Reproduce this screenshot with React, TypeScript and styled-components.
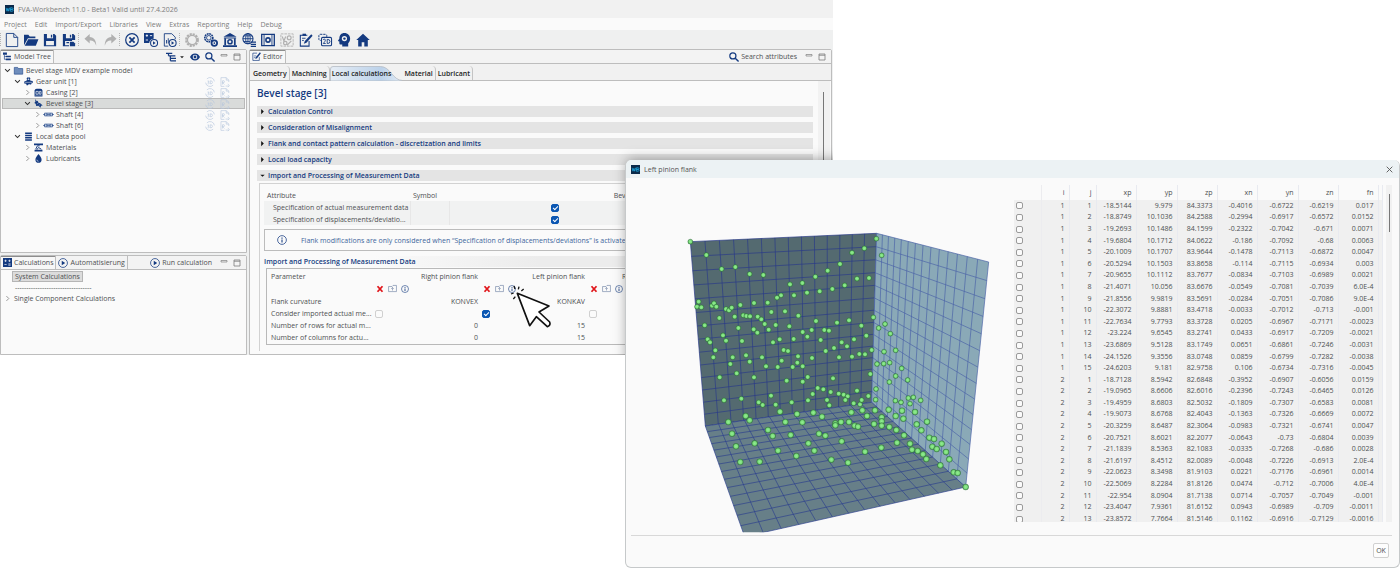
import React from "react";
import styled, { createGlobalStyle, css } from "styled-components";

const NAVY = "#143a80";
const LINE = "#bdbdbd";

const GlobalStyle = createGlobalStyle`
  * { box-sizing: border-box; }
  body {
    margin: 0;
    background: #fff;
    color: #4e5052;
    font-family: "Open Sans", "Noto Sans", sans-serif;
    font-size: 7px;
    line-height: 11px;
  }
  button, input { font: inherit; color: inherit; margin: 0; }
  button { padding: 0; border: 0; background: none; white-space: nowrap; }
  h1, h2, h3, p, ul { margin: 0; padding: 0; font-size: inherit; font-weight: inherit; list-style: none; }
  table { border-collapse: collapse; }
  th, td { padding: 0; font-weight: 400; white-space: nowrap; }
`;

/* ---------- icons ---------- */

const Svg = styled.svg<{ $size?: number; $tone?: string }>`
  display: block;
  flex: none;
  width: ${(p) => p.$size ?? 14}px;
  height: ${(p) => p.$size ?? 14}px;
  color: ${(p) => p.$tone ?? NAVY};
  fill: none;
  stroke: currentColor;
  stroke-width: 1.4;
  overflow: visible;
`;

const solid = { fill: "currentColor", stroke: "none" };

const art: Record<string, React.ReactNode> = {
  logo: (
    <>
      <rect width="16" height="16" fill="#0b2a4a" stroke="none" />
      <path d="M2 5l1.5 6L5 6l1.5 5L8 5M9.5 5v6M9.5 5h3.2c2 0 2 2.8 0 2.8H9.5h3.4c2 0 2 3.2 0 3.2H9.5" stroke="#1ba0d8" strokeWidth="1.5" />
    </>
  ),
  file: <path d="M1.500 .5h8.500l4.500 4.500v10.500H1.500zM10 .5v4.500h4.500" strokeWidth="1" />,
  open: (
    <>
      <path d="M0 14V2h5l1.500 2H13v2H4.500z" {...solid} />
      <path d="M4.800 7H16.500l-3 7.500H.8z" {...solid} />
    </>
  ),
  save: <path fillRule="evenodd" d="M1 1h12l2 2v12H1zM4.500 1v5h7V1zM3.500 9v5h9V9zM9 2h1.500v3H9z" {...solid} />,
  saveAll: (
    <>
      <path fillRule="evenodd" d="M1 1h12l2 2v5h-3.500v1h-8v5H8v1H1zM4.500 1v5h7V1zM9 2h1.500v3H9z" {...solid} />
      <path d="M9 10h4l2 2v3H9z" {...solid} />
      <path d="M5 11h3" />
    </>
  ),
  undo: <path d="M6.500 1L.5 6.500l6 5.500V8.500c4 0 6 1.500 7.500 6C14 8.500 11.500 5 6.500 4.500z" {...solid} />,
  redo: <path d="M9.500 1l6 5.500-6 5.500V8.500c-4 0-6 1.500-7.500 6C2 8.500 4.500 5 9.500 4.500z" {...solid} />,
  cancel: (
    <>
      <circle cx="8" cy="8" r="7.200" />
      <path d="M5 5l6 6M11 5l-6 6" strokeWidth="2" />
    </>
  ),
  calcPlay: (
    <>
      <path d="M0 0h11v6.500a5 5 0 0 0-5 5H0z" {...solid} />
      <path d="M2 3h2.600M3.300 1.700v2.600M6.800 3h2.500M2 8h2.600" stroke="#fff" strokeWidth="1" />
      <circle cx="11.500" cy="11.500" r="4" strokeWidth="1.200" />
      <path d="M10.300 9.500v4l3-2z" {...solid} />
    </>
  ),
  docPlay: (
    <>
      <path d="M6 15H1.500V.8H10l4 4V7" strokeWidth="1" />
      <path d="M4 12V8M6 12V6" strokeWidth="1" />
      <circle cx="11" cy="11.500" r="4" strokeWidth="1.200" />
      <path d="M9.800 9.500v4l3-2z" {...solid} />
    </>
  ),
  ring: (
    <>
      <circle cx="8" cy="8" r="6.600" strokeWidth="2.600" strokeDasharray="2.400 1.050" />
      <circle cx="8" cy="8" r="5.200" strokeWidth="1.400" />
    </>
  ),
  gears: (
    <>
      <circle cx="5.500" cy="5.500" r="4.600" strokeWidth="1.800" strokeDasharray="2 .7" />
      <circle cx="5.500" cy="5.500" r="2.600" strokeWidth="1" />
      <circle cx="11.800" cy="11.500" r="3.200" strokeWidth="2" />
      <circle cx="11.800" cy="11.500" r="1" {...solid} />
    </>
  ),
  bank: (
    <>
      <path d="M8 0l7.500 4.200H.5zM0 14h16v2H0zM1 5h14v1.200H1z" {...solid} />
      <path d="M2.500 6v8M13.500 6v8" strokeWidth="2" />
      <circle cx="8" cy="10" r="2.400" strokeWidth="1.700" />
    </>
  ),
  globe: (
    <>
      <circle cx="6.800" cy="6.500" r="5.800" strokeWidth="1.200" />
      <ellipse cx="6.800" cy="6.500" rx="2.600" ry="5.800" strokeWidth="1" />
      <path d="M1 6.500h11.600M2 3.300h9.600M2 9.700h7M6.800.7v11.600" strokeWidth="1" />
      <path d="M10 10.500h6M10 12.900h6M10 15.300h6" strokeWidth="1.500" />
    </>
  ),
  frame: (
    <>
      <path d="M.8 1.500h14.400v13H.8z" strokeWidth="1.500" />
      <path d="M3.500 1.500v13M12.500 1.500v13" strokeWidth="1" />
      <circle cx="8" cy="8" r="2.400" strokeWidth="1.800" />
    </>
  ),
  vp: (
    <>
      <path d="M1 1h14v14H1z" strokeWidth="1" strokeDasharray="3 1" />
      <path d="M2.500 4l2 5 2-5" strokeWidth="1.300" />
      <circle cx="10.500" cy="5.500" r="2.200" />
      <circle cx="6" cy="11.500" r="2" />
      <path d="M8 14l5-5" />
    </>
  ),
  note: (
    <>
      <path d="M11.500 9v6H1.500V2.500h8" strokeWidth="1.200" />
      <path d="M4 .8h4v2.500H4z" {...solid} />
      <path d="M14 1.500l1.500 1.500L8.500 11l-3 1.200L6.700 9z" {...solid} />
      <path d="M3.500 6h4M3.500 8.500h2" strokeWidth="1" />
    </>
  ),
  twoD: (
    <>
      <rect x="1" y="1.500" width="9" height="7" rx="1.500" strokeWidth="1.100" strokeDasharray="2.500 1" />
      <rect x="4" y="5" width="11.500" height="9.500" rx="1.500" fill="#eeeff0" strokeWidth="1.200" />
      <path d="M6 8q0-1 1.200-1t1.200 1.200Q8.400 9.500 6 12h2.800M10.500 7.300v4.700q3.200.3 3.200-2.300T10.500 7.300z" strokeWidth="1" />
    </>
  ),
  head: (
    <>
      <path fillRule="evenodd" d="M8.300 0C12.500 0 15 2.800 15 6.500c0 2.700-1.200 4-2.200 5.200V15.500H6V13.200H4.200c-1 0-1.500-.6-1.500-1.500V9.600L1 9.200l1.700-3C2.700 2.500 5 0 8.300 0zM8.500 3.400a3 3 0 1 0 0 6 3 3 0 0 0 0-6z" {...solid} />
      <circle cx="8.500" cy="6.400" r="1.400" {...solid} />
    </>
  ),
  home: <path d="M8 .8L.3 8h2.200v7.500h4v-5h3v5h4V8h2.200z" {...solid} />,
  tree: (
    <>
      <path d="M0 1h7v4H0zM5 6.500h9v3H5zM5 11.500h9v3H5z" {...solid} />
      <path d="M2.500 5v8H5M2.500 8H5" strokeWidth="1.200" />
    </>
  ),
  hierarchy: <path d="M0 2h10M4 6h11M4 6V2M7 10h9M7 14h9M7 6v8" strokeWidth="2" />,
  eye: (
    <>
      <path fillRule="evenodd" d="M8 2.500c4 0 6.600 2.600 8 5.500-1.400 2.900-4 5.500-8 5.500S1.400 10.900 0 8c1.400-2.900 4-5.500 8-5.500zm0 1.800a3.700 3.700 0 1 0 0 7.400 3.700 3.700 0 0 0 0-7.400z" {...solid} />
      <circle cx="8" cy="8" r="2.300" {...solid} />
    </>
  ),
  search: (
    <>
      <circle cx="6.200" cy="6.200" r="4.900" strokeWidth="1.900" />
      <path d="M10 10l5.300 5.300" strokeWidth="2.300" />
    </>
  ),
  minimize: <path d="M2 3h12v3H2z" strokeWidth="1.300" />,
  maximize: <path d="M2 2h12v12H2zM2 4.500h12" strokeWidth="1.500" />,
  caret: <path d="M3 6h10l-5 5z" {...solid} />,
  open_down: <path d="M2.500 5l5.500 5.500L13.500 5" strokeWidth="2.300" />,
  open_right: <path d="M5.500 2.500L11 8l-5.500 5.500" strokeWidth="2" />,
  folder: <path d="M.5 2.500h6l1.500 2h7.500v10H.5z" fill="#6f8dbc" stroke={NAVY} strokeWidth="1" />,
  gearUnit: (
    <>
      <path d="M5.500 1h5l1 2.500-1.500 1.500 2 1.500L15.500 7v3.500l-2 .5-1 2.500H10l-1-1.500-2 2.500H4.500L4 12l-3.500-.5V8L4 6.500 6 5 4.500 3.500z" {...solid} />
      <circle cx="8" cy="4" r="1.300" fill="#dfe5ee" stroke="none" />
      <path d="M2 9.500h12" stroke="#dfe5ee" strokeWidth="1" />
    </>
  ),
  casing: (
    <>
      <path d="M1 4q2-3 5-2.500h5Q14 1.500 15 4v11H1z" {...solid} />
      <path d="M3.500 6h4v5h-4zM9.500 6h3v5h-3z" stroke="#fff" strokeWidth="1.200" />
      <path d="M1 13h14" stroke="#9db0cf" strokeWidth=".8" />
    </>
  ),
  bevel: (
    <>
      <path d="M2 0l3 4 1.500-1L8 6.500l3 1 4.500 4-3 .5-1 3.500L8 12l-4 .5-1-4L.5 7l2-2z" {...solid} />
      <path d="M5 9l3-2M9 11l2-1" stroke="#b9c6dd" strokeWidth=".9" />
    </>
  ),
  shaft: (
    <>
      <path d="M-1 8h3M14 8h3" strokeWidth="2" />
      <path d="M1 5.500h14v5H1z" fill="#c4d0e4" strokeWidth="1.100" />
      <path d="M5 5.500v5M11 5.500v5M5 8h6" strokeWidth="1" />
    </>
  ),
  pool: <path d="M2 2.200h12M2 6.200h12M2 10.200h12M2 14.200h12" strokeWidth="2.800" />,
  materials: (
    <>
      <path d="M0 1h16v3H0zM1 12h14v3H1z" {...solid} />
      <path d="M3 11l3-6h4M5 12l3-4 5 3" strokeWidth="1.700" />
    </>
  ),
  drop: (
    <>
      <path d="M8 0c3 4 5.500 6.800 5.500 10a5.500 5.500 0 0 1-11 0C2.500 6.800 5 4 8 0z" {...solid} />
      <path d="M5 10a3 3 0 0 0 3 3" stroke="#fff" strokeWidth="1" />
    </>
  ),
  view3d: <path d="M1 9a7 7 0 0 0 12 4M15 7A7 7 0 0 0 3 3M4 6.500h2.500L5 8.500q2 0 1.500 1.600T4 11M8.500 6v5q3.500 0 3.500-2.500T8.500 6" strokeWidth="1" />,
  report: <path d="M7 15H1.500V1H10l4 4v3M10 1v4h4M4 12V6h2.500q1.500 1.500 0 3H4l3 3M9 14.500h5M12.500 11l2.500 3-2.500 2" strokeWidth="1" />,
  calc: (
    <>
      <path d="M0 0h16v16H0z" {...solid} />
      <path d="M2.500 5h4M4.500 3v4M9.500 5h4M2.500 11.500h4M9.500 10.500h4M9.500 12.800h4M11.500 3v4" stroke="#fff" strokeWidth="1.200" />
    </>
  ),
  play: (
    <>
      <circle cx="8" cy="8" r="7.100" strokeWidth="1.200" />
      <path d="M6 4.500v7L11.500 8z" {...solid} />
    </>
  ),
  editor: (
    <>
      <path d="M13 9v6H1.500V2H9" strokeWidth="1.200" />
      <path d="M3.500 7h4M3.500 10h3" strokeWidth="1" />
      <path d="M14 .5L15.800 2 9 11l-3 1.500L7 9z" {...solid} />
    </>
  ),
  info: (
    <>
      <circle cx="8" cy="8" r="7" strokeWidth="1.200" />
      <path d="M8 7v5M8 4v1.800" strokeWidth="1.700" />
    </>
  ),
  remove: <path d="M3 2.500l10 11M13 2.500l-10 11" strokeWidth="3.600" />,
  importFile: <path d="M1 4.500h6l2-2h6v11H1zM8 11.500v-5M5.800 8.500L8 6.200l2.200 2.300" strokeWidth="1" />,
  close: <path d="M3 3l10 10M13 3L3 13" strokeWidth="1.600" />,
};

const Icon = ({ name, size, tone }: { name: string; size?: number; tone?: string }) => (
  <Svg viewBox="0 0 16 16" $size={size} $tone={tone} aria-hidden="true">
    {art[name]}
  </Svg>
);

/* ---------- main window ---------- */

const Stage = styled.div`
  position: relative;
  min-height: 568px;
`;

const MainWindow = styled.main`
  position: relative;
  width: 59.5%;
  background: #eff0f0;
  overflow: hidden;
`;

const TitleBar = styled.header<{ $tint: string }>`
  display: flex;
  align-items: center;
  gap: 4px;
  height: 18px;
  padding: 0 5px;
  background: ${(p) => p.$tint};
`;

const WindowTitle = styled.h1<{ $faded?: boolean }>`
  flex: 1;
  color: ${(p) => (p.$faded ? "#7d7d7d" : "#555")};
`;

const MenuBar = styled.nav`
  display: flex;
  gap: 8px;
  height: 12px;
  padding: 0 4px;
  background: #fafafa;
  color: #7c7c7c;
`;

const ToolBar = styled.div`
  display: flex;
  align-items: center;
  height: 19px;
`;

const ToolButton = styled.button`
  display: flex;
  justify-content: center;
  width: 19px;
`;

const Grip = styled.span`
  width: 3px;
  height: 13px;
  border-left: 1px dotted #b4b4b4;
  &:first-child { width: 2px; }
`;

const Workspace = styled.div`
  display: grid;
  grid-template-columns: 247px minmax(0, 1fr);
  gap: 2px;
  padding-right: 1px;
`;

const Side = styled.div`
  display: grid;
  grid-template-rows: 204px 1fr;
  gap: 2px;
`;

const Pane = styled.section`
  display: flex;
  flex-direction: column;
  border: 1px solid ${LINE};
  border-radius: 2px 2px 0 0;
  background: #fafafa;
`;

const PaneBar = styled.div`
  display: flex;
  align-items: stretch;
  height: 14px;
  flex: none;
  padding-right: 5px;
  border-bottom: 1px solid ${LINE};
  background: #f3f3f3;
`;

const PaneTab = styled.button<{ $active?: boolean }>`
  display: flex;
  align-items: center;
  gap: 2px;
  padding: 0 2px;
  border-right: 1px solid ${LINE};
  ${(p) => p.$active && css`box-shadow: inset 0 1px #8d8d8d; background: #f7f7f7;`}
`;

const PaneTools = styled.div`
  display: flex;
  align-items: center;
  gap: 5px;
  margin-left: auto;
`;

const PaneTool = styled.button<{ $labelled?: boolean }>`
  display: flex;
  align-items: center;
  gap: ${(p) => (p.$labelled ? 2 : 3)}px;
  margin-right: ${(p) => (p.$labelled ? 3 : 0)}px;
`;

const Tree = styled.ul`
  padding: 1px 1px 0 1px;
`;

const TreeRow = styled.li<{ $level: number; $selected?: boolean }>`
  display: flex;
  align-items: center;
  gap: 3px;
  height: 11px;
  padding: 0 15px 0 ${(p) => 2 + p.$level * 10}px;
  ${(p) => p.$selected && css`background: #d9dbda; box-shadow: inset 0 0 0 1px #b9b9b9;`}
`;

const TreeLabel = styled.span`
  flex: 1;
`;

const TreeMarks = styled.span`
  display: flex;
  gap: 5px;
`;

const CalcList = styled.div`
  display: flex;
  flex-direction: column;
  align-items: flex-start;
  padding: 1px 3px;
`;

const CalcChoice = styled.button`
  margin-left: 8px;
  padding: 0 2px;
  border: 1px solid #b5b5b5;
  background: #dcdcdc;
  line-height: 9px;
`;

const CalcRule = styled.span`
  margin-left: 11px;
`;

const CalcGroup = styled.button`
  display: flex;
  align-items: center;
  gap: 3px;
`;

const EditorTabs = styled.div`
  display: flex;
  align-items: stretch;
  height: 17px;
  flex: none;
  padding: 2px 0 0 1px;
  border-bottom: 1px solid ${LINE};
  background: #f1f1f1;
`;

const EditorTab = styled.button<{ $active?: boolean }>`
  position: relative;
  padding: 0 2px;
  border-right: 1px solid #c4c4c4;
  border-radius: 0 4px 0 0;
  color: #1c1c1c;
  font-weight: 600;
  ${(p) => p.$active && css`padding-right: 11px; border-right: 0;`}
`;

const TabShape = styled.svg`
  position: absolute;
  inset: 0 auto auto 0;
  width: 100%;
  height: 15px;
`;

const TabText = styled.span`
  position: relative;
`;

const EditorBody = styled.div`
  display: flex;
  flex: 1;
`;

const EditorContent = styled.div`
  flex: 1;
  min-width: 0;
  padding: 5px 5px 3px 7px;
`;

const EditorScroll = styled.div`
  width: 12px;
  margin-right: 1px;
  padding: 11px 5px 0;
  background: #f2f2f2;
`;

const Thumb = styled.div<{ $height: string }>`
  width: 1px;
  height: ${(p) => p.$height};
  background: #777;
`;

const PageTitle = styled.h2`
  margin-bottom: 6px;
  color: ${NAVY};
  font-size: 10px;
  font-weight: 600;
  line-height: 14px;
`;

const SectionBar = styled.button`
  display: flex;
  align-items: center;
  gap: 2px;
  width: 100%;
  height: 11px;
  margin-bottom: 5px;
  padding-left: 2px;
  background: #e4e4e4;
  color: ${NAVY};
  font-weight: 600;
`;

const SectionBox = styled.div`
  margin: -3px 0 0 2px;
  padding: 5px 0 6px 4px;
  border: 1px solid #d2d2d2;
  border-width: 1px 0 0 1px;
`;

const AttributeTable = styled.table`
  width: 100%;
  table-layout: fixed;
  th { height: 12px; padding-left: 3px; text-align: left; }
  thead th:nth-child(3) { text-align: right; }
  tbody th { padding-left: 9px; }
  tbody tr { height: 12px; background: #f1f2f2; }
  td { border-left: 1px solid #e7e7e7; text-align: center; }
`;

const CheckBox = styled.input<{ $plain?: boolean }>`
  appearance: none;
  display: inline-block;
  position: relative;
  width: ${(p) => (p.$plain ? 7 : 8)}px;
  height: ${(p) => (p.$plain ? 7 : 8)}px;
  border: 1px solid ${(p) => (p.$plain ? "#9a9a9a" : "#d0d0d0")};
  border-radius: 2px;
  background: #fbfbfb;
  vertical-align: middle;
  &:checked {
    border-color: #0b57b3;
    background: #0b57b3;
  }
  &:checked::after {
    content: "";
    position: absolute;
    left: 1px;
    top: 1px;
    width: 4px;
    height: 2px;
    border: solid #fff;
    border-width: 0 0 1px 1px;
    transform: rotate(-45deg);
  }
`;

const Notice = styled.p`
  display: flex;
  align-items: center;
  gap: 14px;
  height: 22px;
  margin: 4px 0 5px;
  padding-left: 12px;
  border: 1px solid #bcbcbc;
  color: #41669c;
  white-space: nowrap;
  overflow: hidden;
`;

const SubHeading = styled.h3`
  color: ${NAVY};
  font-weight: 600;
  background: linear-gradient(90deg, transparent 20%, #ececec 50%);
`;

const ParamFrame = styled.div`
  margin: 1px 0 0 2px;
  padding: 1px 0;
  border: 1px solid #b9b9b9;
`;

const ParamTable = styled.table`
  width: 535px;
  table-layout: fixed;
  tr { height: 12px; }
  th, td { text-align: right; padding-right: 3px; }
  tr > :first-child { text-align: left; padding: 0 0 0 4px; }
  .actions { height: 13px; }
  .boxes { text-align: left; padding: 0 0 0 1px; }
`;

const CellTools = styled.span`
  display: flex;
  gap: 4px;
  padding-left: 2px;
`;

const Pointer = styled.svg`
  position: absolute;
  left: 508px;
  top: 285px;
  width: 45px;
  height: 43px;
`;

const DialogShade = styled.div`
  position: absolute;
  left: 75.5%;
  right: -20px;
  top: 162px;
  bottom: -20px;
  box-shadow: 0 0 12px 2px rgba(0, 0, 0, 0.4);
`;

/* ---------- dialog ---------- */

const Dialog = styled.section`
  position: absolute;
  top: 160px;
  right: 0;
  width: 55.35%;
  overflow: hidden;
  border: 1px solid #c6c9ca;
  border-width: 0 1px 1px 1px;
  border-radius: 6px;
  background: #fafafa;
`;

const DialogBody = styled.div`
  display: flex;
  align-items: flex-start;
`;

const Chart = styled.svg`
  flex: 1;
  min-width: 0;
  height: 355px;
`;

const TableArea = styled.div`
  display: flex;
  gap: 3px;
  width: 378px;
  height: 337px;
  margin: 7px 7px 0 0;
  overflow: hidden;
`;

const PointTable = styled.table`
  width: 368px;
  height: 340px;
  table-layout: fixed;
  background: linear-gradient(#fafafa 15px, #f0f0f0 15px);
  line-height: 10px;
  thead tr { height: 15px; }
  th, td { padding-right: 4px; border-right: 1px solid #e8eaf0; text-align: right; }
  tr > :first-child { padding: 0 0 0 2px; border-right-color: #ececef; text-align: left; }
`;

const TableScroll = styled.div`
  width: 7px;
  height: 337px;
  padding: 9px 3px 0;
  background: #f1f1f1;
`;

const DialogFooter = styled.footer`
  display: flex;
  justify-content: flex-end;
  margin: 2px 7px 0 5px;
  padding: 7px 3px 9px 0;
  border-top: 1px solid #d8d8d8;
`;

const OkButton = styled.button`
  width: 16px;
  height: 15px;
  border: 1px solid #d0d0d0;
  border-radius: 2px;
  background: #fdfdfd;
`;

/* ---------- data ---------- */

const menus = ["Project", "Edit", "Import/Export", "Libraries", "View", "Extras", "Reporting", "Help", "Debug"];

const toolGroups: { icon: string; off?: boolean }[][] = [
  [{ icon: "file" }, { icon: "open" }, { icon: "save" }, { icon: "saveAll" }],
  [{ icon: "undo", off: true }, { icon: "redo", off: true }],
  [{ icon: "cancel" }, { icon: "calcPlay" }, { icon: "docPlay" }],
  [
    { icon: "ring", off: true }, { icon: "gears" }, { icon: "bank" }, { icon: "globe" }, { icon: "frame" },
    { icon: "vp", off: true }, { icon: "note" }, { icon: "twoD" }, { icon: "head" }, { icon: "home" },
  ],
];

const treeRows: [number, string, string, boolean, boolean][] = [
  [0, "folder", "Bevel stage MDV example model", true, false],
  [1, "gearUnit", "Gear unit [1]", true, true],
  [2, "casing", "Casing [2]", false, true],
  [2, "bevel", "Bevel stage [3]", true, true],
  [3, "shaft", "Shaft [4]", false, true],
  [3, "shaft", "Shaft [6]", false, true],
  [1, "pool", "Local data pool", true, false],
  [2, "materials", "Materials", false, false],
  [2, "drop", "Lubricants", false, false],
];

const sections = [
  "Calculation Control",
  "Consideration of Misalignment",
  "Flank and contact pattern calculation - discretization and limits",
  "Local load capacity",
];

const flanks = ["Right pinion flank", "Left pinion flank", "Right bevel gear flank", "Left bevel gear flank"];

const points = `1 1 -18.5144 9.979 84.3373 -0.4016 -0.6722 -0.6219 0.017
1 2 -18.8749 10.1036 84.2588 -0.2994 -0.6917 -0.6572 0.0152
1 3 -19.2693 10.1486 84.1599 -0.2322 -0.7042 -0.671 0.0071
1 4 -19.6804 10.1712 84.0622 -0.186 -0.7092 -0.68 0.0063
1 5 -20.1009 10.1707 83.9644 -0.1478 -0.7113 -0.6872 0.0047
1 6 -20.5294 10.1503 83.8658 -0.114 -0.7115 -0.6934 0.003
1 7 -20.9655 10.1112 83.7677 -0.0834 -0.7103 -0.6989 0.0021
1 8 -21.4071 10.056 83.6676 -0.0549 -0.7081 -0.7039 6.0E-4
1 9 -21.8556 9.9819 83.5691 -0.0284 -0.7051 -0.7086 9.0E-4
1 10 -22.3072 9.8881 83.4718 -0.0033 -0.7012 -0.713 -0.001
1 11 -22.7634 9.7793 83.3728 0.0205 -0.6967 -0.7171 -0.0023
1 12 -23.224 9.6545 83.2741 0.0433 -0.6917 -0.7209 -0.0021
1 13 -23.6869 9.5128 83.1749 0.0651 -0.6861 -0.7246 -0.0031
1 14 -24.1526 9.3556 83.0748 0.0859 -0.6799 -0.7282 -0.0038
1 15 -24.6203 9.181 82.9758 0.106 -0.6734 -0.7316 -0.0045
2 1 -18.7128 8.5942 82.6848 -0.3952 -0.6907 -0.6056 0.0159
2 2 -19.0965 8.6606 82.6016 -0.2396 -0.7243 -0.6465 0.0126
2 3 -19.4959 8.6803 82.5032 -0.1809 -0.7307 -0.6583 0.0081
2 4 -19.9073 8.6768 82.4043 -0.1363 -0.7326 -0.6669 0.0072
2 5 -20.3259 8.6487 82.3064 -0.0983 -0.7321 -0.6741 0.0047
2 6 -20.7521 8.6021 82.2077 -0.0643 -0.73 -0.6804 0.0039
2 7 -21.1839 8.5363 82.1083 -0.0335 -0.7268 -0.686 0.0028
2 8 -21.6197 8.4512 82.0089 -0.0048 -0.7226 -0.6913 2.0E-4
2 9 -22.0623 8.3498 81.9103 0.0221 -0.7176 -0.6961 0.0014
2 10 -22.5069 8.2284 81.8126 0.0474 -0.712 -0.7006 4.0E-4
2 11 -22.954 8.0904 81.7138 0.0714 -0.7057 -0.7049 -0.001
2 12 -23.4047 7.9361 81.6152 0.0943 -0.6989 -0.709 -0.0011
2 13 -23.8572 7.7664 81.5146 0.1162 -0.6916 -0.7129 -0.0016`
  .split("\n")
  .map((line) => line.split(" "));

/* ---------- 3D scene ---------- */

type Pt = [number, number];

// Maps the unit square onto a quadrilateral in perspective.
const project = ([a, b, c, d]: Pt[]) => {
  const dx1 = b[0] - c[0], dx2 = d[0] - c[0], sx = a[0] - b[0] + c[0] - d[0];
  const dy1 = b[1] - c[1], dy2 = d[1] - c[1], sy = a[1] - b[1] + c[1] - d[1];
  const det = dx1 * dy2 - dx2 * dy1;
  const g = (sx * dy2 - dx2 * sy) / det;
  const h = (dx1 * sy - sx * dy1) / det;
  return (u: number, v: number): Pt => {
    const w = g * u + h * v + 1;
    return [
      ((b[0] - a[0] + g * b[0]) * u + (d[0] - a[0] + h * d[0]) * v + a[0]) / w,
      ((b[1] - a[1] + g * b[1]) * u + (d[1] - a[1] + h * d[1]) * v + a[1]) / w,
    ];
  };
};

const Wall = ({ corners, fill, line }: { corners: Pt[]; fill: string; line: string }) => {
  const at = project(corners);
  const steps = Array.from({ length: 15 }, (_, i) => i / 14);
  const path = steps.map((t) => `M${at(t, 0)}L${at(t, 1)}M${at(0, t)}L${at(1, t)}`).join("");
  return (
    <g>
      <polygon points={corners.join(" ")} fill={fill} />
      <path d={path} stroke={line} strokeWidth="2" fill="none" />
    </g>
  );
};

const dots: Pt[] = [
  [211, 260], [259, 300], [305, 342], [346, 336], [389, 357], [430, 360], [510, 388], [547, 384], [586, 365],
  [623, 347], [660, 327], [696, 293], [733, 280], [769, 251], [785, 301], [711, 371], [747, 369], [674, 391],
  [637, 402], [599, 409], [561, 413], [522, 421], [483, 421], [471, 428], [443, 443], [402, 444], [361, 450],
  [236, 440], [231, 455], [244, 457], [276, 452], [282, 445], [289, 455], [318, 462], [327, 466], [335, 458],
  [298, 489], [344, 485], [370, 481], [379, 483], [390, 484], [413, 485], [424, 493], [454, 471], [495, 469],
  [535, 482], [588, 498], [651, 503], [687, 496], [724, 512], [760, 487], [776, 519], [795, 507], [811, 536],
  [254, 511], [355, 519], [401, 523], [412, 533], [434, 507], [446, 524], [467, 510], [508, 514], [548, 531],
  [575, 525], [562, 545], [613, 525], [627, 527], [739, 542], [702, 553], [665, 562], [681, 574], [642, 579],
  [602, 555], [521, 552], [479, 553], [459, 562], [366, 558], [318, 557], [309, 541], [263, 553], [270, 562],
  [286, 586], [280, 607], [338, 607], [331, 627], [378, 601], [389, 620], [426, 607], [491, 585], [504, 588],
  [485, 617], [534, 604], [532, 623], [576, 609], [617, 588], [657, 607], [696, 605], [718, 597], [735, 598],
  [755, 585], [792, 590], [827, 586], [771, 627], [791, 626], [809, 623], [438, 634], [473, 636], [518, 636],
  [548, 634], [845, 640], [751, 657], [827, 663], [808, 681], [863, 675], [299, 667], [350, 655], [402, 667],
  [500, 677], [548, 680], [563, 666], [639, 670], [593, 699], [610, 703], [632, 711], [656, 716], [671, 719],
  [683, 724], [676, 735], [711, 707], [745, 723], [768, 702], [767, 734], [312, 736], [364, 731], [416, 742],
  [428, 750], [453, 722], [467, 749], [515, 742], [578, 717], [564, 736], [621, 735], [628, 751], [701, 745],
  [720, 748], [725, 735], [727, 766], [765, 766], [694, 772], [741, 783], [826, 737], [843, 742], [865, 729],
  [880, 727], [902, 736], [870, 746], [806, 764], [846, 767], [885, 771], [827, 783], [850, 791], [785, 787],
  [785, 799], [785, 812], [762, 807], [808, 816], [829, 825], [890, 808], [921, 800], [904, 826], [852, 841],
  [831, 863], [870, 866], [876, 884], [893, 888], [909, 898], [919, 912], [928, 848], [942, 852], [937, 875],
  [950, 882], [965, 866], [978, 891], [988, 913], [961, 931], [1001, 952], [1013, 954], [1037, 996],
  [325, 801], [377, 783], [389, 796], [480, 770], [531, 777], [580, 773], [606, 785], [496, 801], [547, 802],
  [646, 805], [646, 811], [663, 801], [687, 801], [704, 812], [714, 815], [336, 836], [444, 825], [458, 843],
  [512, 840], [597, 836], [616, 842], [348, 874], [404, 865], [565, 865], [665, 859], [474, 887], [583, 887],
  [735, 890], [784, 878], [361, 921], [419, 920], [529, 903], [634, 914], [684, 923],
];

const Scene = () => (
  <Chart viewBox="18 69 1152 1065" preserveAspectRatio="xMinYMin meet" role="img">
    <defs>
      <clipPath id="view"><rect x="18" y="69" width="1152" height="1063" /></clipPath>
      <radialGradient id="ball">
        <stop offset="0" stopColor="#93f093" />
        <stop offset="0.600" stopColor="#7cdc7c" />
        <stop offset="1" stopColor="#3f8f45" />
      </radialGradient>
    </defs>
    <g clipPath="url(#view)">
      <Wall corners={[[211, 260], [770, 235], [755, 742], [256, 813]]} fill="#546a70" line="#29398a" />
      <Wall corners={[[770, 235], [1106, 321], [1037, 996], [755, 742]]} fill="#8aa9b7" line="#4a62a8" />
      <Wall corners={[[256, 813], [755, 742], [1037, 996], [374, 1145]]} fill="#677f88" line="#2c3f8e" />
    </g>
    {dots.map(([x, y], i) => (
      <circle key={i} cx={x} cy={y} r={y > 760 ? 9 : 7.5} fill="url(#ball)" stroke="#2f6b3c" strokeWidth="1" />
    ))}
  </Chart>
);

/* ---------- page ---------- */

const WindowButtons = () => (
  <>
    <PaneTool aria-label="Minimize"><Icon name="minimize" size={8} tone="#777" /></PaneTool>
    <PaneTool aria-label="Maximize"><Icon name="maximize" size={8} tone="#777" /></PaneTool>
  </>
);

const ModelTree = () => (
  <Pane>
    <PaneBar>
      <PaneTab $active><Icon name="tree" size={9} />Model Tree</PaneTab>
      <PaneTools>
        <PaneTool aria-label="Structure"><Icon name="hierarchy" size={10} /><Icon name="caret" size={6} tone="#222" /></PaneTool>
        <PaneTool aria-label="Show"><Icon name="eye" size={10} /></PaneTool>
        <PaneTool aria-label="Find"><Icon name="search" size={10} /></PaneTool>
        <WindowButtons />
      </PaneTools>
    </PaneBar>
    <Tree>
      {treeRows.map(([level, icon, label, open, marks]) => (
        <TreeRow key={label} $level={level} $selected={label === "Bevel stage [3]"}>
          <Icon name={open ? "open_down" : "open_right"} size={7} tone={open ? "#333" : "#888"} />
          <Icon name={icon} size={9} />
          <TreeLabel>{label}</TreeLabel>
          {marks && (
            <TreeMarks>
              <Icon name="view3d" size={10} tone="#b7c7de" />
              <Icon name="report" size={10} tone="#b7c7de" />
            </TreeMarks>
          )}
        </TreeRow>
      ))}
    </Tree>
  </Pane>
);

const Calculations = () => (
  <Pane>
    <PaneBar>
      <PaneTab $active><Icon name="calc" size={9} />Calculations</PaneTab>
      <PaneTab><Icon name="play" size={10} />Automatisierung</PaneTab>
      <PaneTools>
        <PaneTool $labelled><Icon name="play" size={10} />Run calculation</PaneTool>
        <WindowButtons />
      </PaneTools>
    </PaneBar>
    <CalcList>
      <CalcChoice>System Calculations</CalcChoice>
      <CalcRule>----------------------------------</CalcRule>
      <CalcGroup><Icon name="open_right" size={7} tone="#888" />Single Component Calculations</CalcGroup>
    </CalcList>
  </Pane>
);

const Editor = () => (
  <Pane>
    <PaneBar>
      <PaneTab $active><Icon name="editor" size={9} />Editor</PaneTab>
      <PaneTools>
        <PaneTool $labelled><Icon name="search" size={10} />Search attributes</PaneTool>
        <WindowButtons />
      </PaneTools>
    </PaneBar>
    <EditorTabs>
      <EditorTab>Geometry</EditorTab>
      <EditorTab>Machining</EditorTab>
      <EditorTab $active>
        <TabShape viewBox="0 0 72 15" preserveAspectRatio="none">
          <defs>
            <linearGradient id="tab"><stop stopColor="#e6edf5" /><stop offset="0.700" stopColor="#bcd2ea" /><stop offset="1" stopColor="#e3ecf6" /></linearGradient>
          </defs>
          <path d="M.5 15V3Q.5.500 3 .5H50C60 .5 62 14.500 72 14.500V15z" fill="url(#tab)" stroke="#b5bcc4" strokeWidth=".8" />
        </TabShape>
        <TabText>Local calculations</TabText>
      </EditorTab>
      <EditorTab>Material</EditorTab>
      <EditorTab>Lubricant</EditorTab>
    </EditorTabs>
    <EditorBody>
      <EditorContent>
        <PageTitle>Bevel stage [3]</PageTitle>
        {sections.map((title) => (
          <SectionBar key={title} aria-expanded={false}>
            <Svg viewBox="0 0 16 16" $size={7} $tone="#111"><path d="M5 2l6 6-6 6z" {...solid} /></Svg>
            {title}
          </SectionBar>
        ))}
        <SectionBar aria-expanded>
          <Icon name="caret" size={7} tone="#111" />
          Import and Processing of Measurement Data
        </SectionBar>
        <SectionBox>
          <AttributeTable>
            <colgroup><col width="146" /><col width="39" /><col width="212" /><col /></colgroup>
            <thead>
              <tr><th>Attribute</th><th>Symbol</th><th>Bevel stage [3]</th><th></th></tr>
            </thead>
            <tbody>
              <tr>
                <th><label htmlFor="actual">Specification of actual measurement data</label></th>
                <td></td><td><CheckBox id="actual" type="checkbox" defaultChecked /></td><td></td>
              </tr>
              <tr>
                <th><label htmlFor="deviation">Specification of displacements/deviatio...</label></th>
                <td></td><td><CheckBox id="deviation" type="checkbox" defaultChecked /></td><td></td>
              </tr>
            </tbody>
          </AttributeTable>
          <Notice>
            <Icon name="info" size={10} />
            Flank modifications are only considered when “Specification of displacements/deviations” is activated
          </Notice>
          <SubHeading>Import and Processing of Measurement Data</SubHeading>
          <ParamFrame>
            <ParamTable>
              <thead>
                <tr><th>Parameter</th>{flanks.map((f) => <th key={f}>{f}</th>)}</tr>
              </thead>
              <tbody>
                <tr>
                  <td className="actions"></td>
                  {flanks.map((f) => (
                    <td key={f}>
                      <CellTools>
                        <PaneTool aria-label="Delete"><Icon name="remove" size={8} tone="#e0161b" /></PaneTool>
                        <PaneTool aria-label="Import"><Icon name="importFile" size={9} tone="#5d7399" /></PaneTool>
                        <PaneTool aria-label="Details"><Icon name="info" size={8} /></PaneTool>
                      </CellTools>
                    </td>
                  ))}
                </tr>
                <tr><th>Flank curvature</th><td>KONVEX</td><td>KONKAV</td><td></td><td></td></tr>
                <tr>
                  <th>Consider imported actual me...</th>
                  {flanks.map((f, i) => (
                    <td key={f} className="boxes"><CheckBox type="checkbox" aria-label={`Consider ${f}`} defaultChecked={i === 1} /></td>
                  ))}
                </tr>
                <tr><th>Number of rows for actual m...</th><td>0</td><td>15</td><td></td><td></td></tr>
                <tr><th>Number of columns for actu...</th><td>0</td><td>15</td><td></td><td></td></tr>
              </tbody>
            </ParamTable>
          </ParamFrame>
        </SectionBox>
      </EditorContent>
      <EditorScroll><Thumb $height="100%" /></EditorScroll>
    </EditorBody>
  </Pane>
);

const FlankDialog = () => (
  <Dialog role="dialog" aria-label="Left pinion flank">
    <TitleBar $tint="#ecf2f4">
      <Icon name="logo" size={9} />
      <WindowTitle as="h2">Left pinion flank</WindowTitle>
      <PaneTool aria-label="Close"><Icon name="close" size={9} tone="#555" /></PaneTool>
    </TitleBar>
    <DialogBody>
      <Scene />
      <TableArea>
        <PointTable>
          <colgroup>
            {[27, 28, 27, 40, 41, 40, 40, 41, 40, 40, 4].map((w, i) => <col key={i} width={w} />)}
          </colgroup>
          <thead>
            <tr><th></th>{["i", "j", "xp", "yp", "zp", "xn", "yn", "zn", "fn"].map((h) => <th key={h}>{h}</th>)}<th></th></tr>
          </thead>
          <tbody>
            {points.map((row) => (
              <tr key={row[0] + "-" + row[1]}>
                <td><CheckBox $plain type="checkbox" aria-label={`Point ${row[0]}, ${row[1]}`} /></td>
                {row.map((value, i) => <td key={i}>{value}</td>)}
                <td></td>
              </tr>
            ))}
          </tbody>
        </PointTable>
        <TableScroll><Thumb $height="38px" /></TableScroll>
      </TableArea>
    </DialogBody>
    <DialogFooter><OkButton>OK</OkButton></DialogFooter>
  </Dialog>
);

export default function App() {
  return (
    <Stage>
      <GlobalStyle />
      <MainWindow>
        <TitleBar $tint="#f1f1f1">
          <Icon name="logo" size={9} />
          <WindowTitle $faded>FVA-Workbench 11.0 - Beta1 Valid until 27.4.2026</WindowTitle>
        </TitleBar>
        <MenuBar>{menus.map((m) => <button key={m}>{m}</button>)}</MenuBar>
        <ToolBar>
          {toolGroups.map((group, g) => (
            <React.Fragment key={g}>
              <Grip />
              {group.map(({ icon, off }) => (
                <ToolButton key={icon} aria-label={icon}><Icon name={icon} tone={off ? "#b0b0b0" : NAVY} /></ToolButton>
              ))}
            </React.Fragment>
          ))}
        </ToolBar>
        <Workspace>
          <Side>
            <ModelTree />
            <Calculations />
          </Side>
          <Editor />
        </Workspace>
        <Pointer viewBox="775 315 135 129">
          <path d="M803 340L898 378L868 396L900 426Q904 436 893 440L860 410L840 437Z" fill="#fff" stroke="#111" strokeWidth="5" strokeLinejoin="round" />
          <path d="M796 327l-3-9M806 328l2-8M815 333l7-6M792 339l-8 3M797 350l-6 7" stroke="#111" strokeWidth="4" />
        </Pointer>
        <DialogShade />
      </MainWindow>
      <FlankDialog />
    </Stage>
  );
}
